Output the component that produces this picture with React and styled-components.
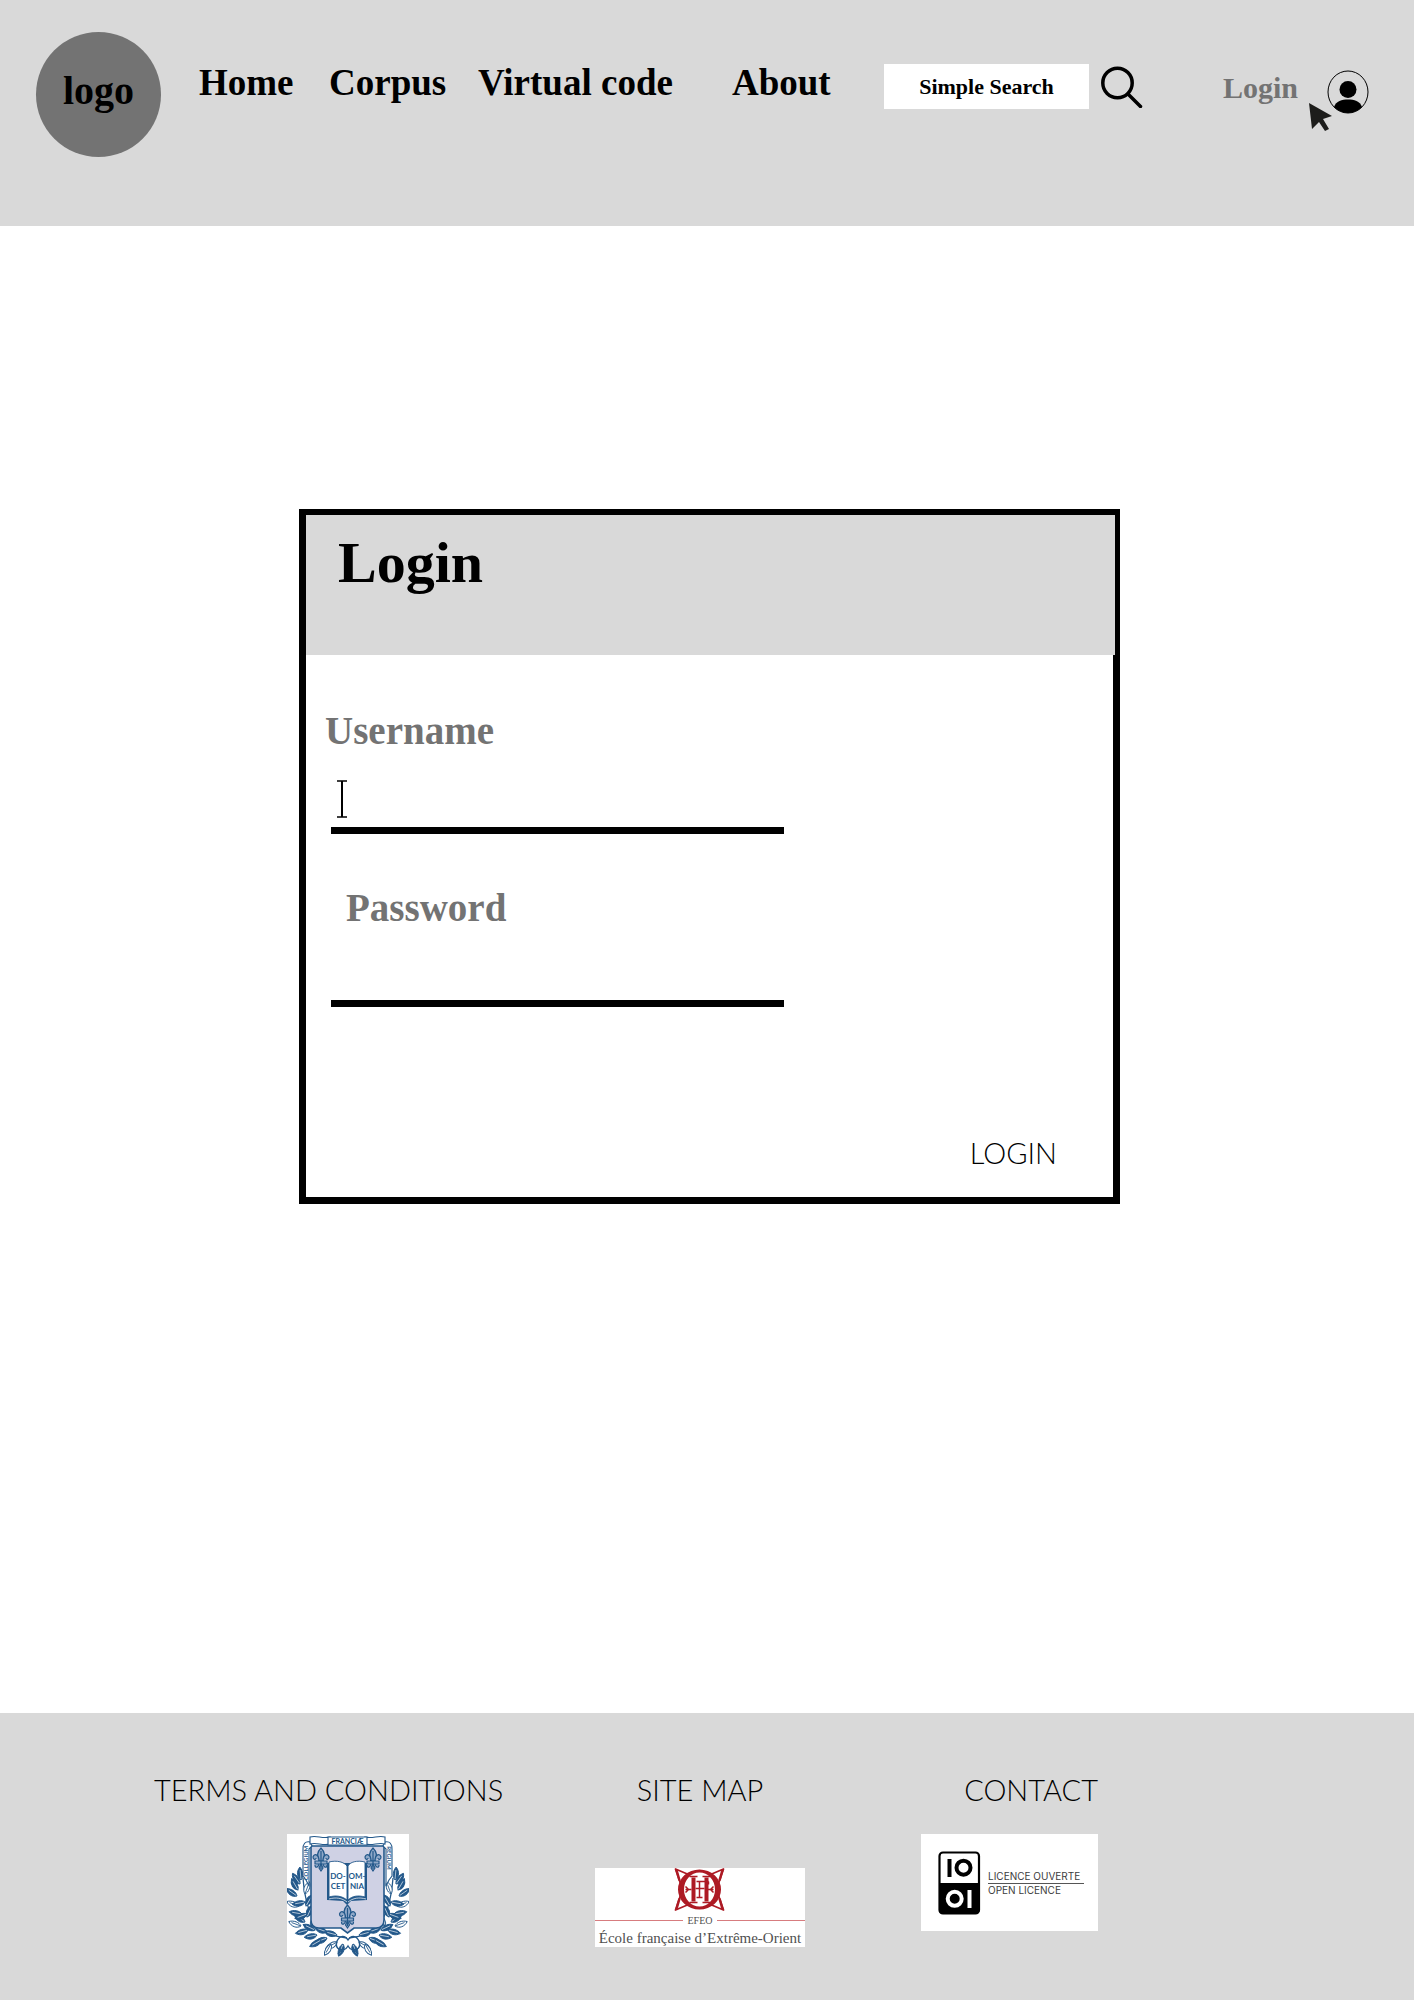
import React from "react";
import styled, { createGlobalStyle } from "styled-components";

const display = '"Liberation Serif", "Times New Roman", serif';
const thin = 'Lato, "Open Sans", sans-serif';
const grey = "#d9d9d9";
const muted = "#737373";
const blue = "#23588a";
const red = "#ad1a24";

const GlobalStyle = createGlobalStyle`
  *, *::before, *::after { box-sizing: border-box; }
  body { margin: 0; background: #fff; color: #000; font-family: ${display}; }
  button, input { font: inherit; color: inherit; border: 0; padding: 0; margin: 0; background: none; border-radius: 0; }
  button { cursor: pointer; }
  a { color: inherit; text-decoration: none; }
  svg { display: block; }
`;

const Header = styled.header`
  display: flex;
  align-items: flex-start;
  min-height: 226px;
  padding: 32px 45px 0 36px;
  background: ${grey};
  font-weight: 700;
`;

const Logo = styled.a`
  display: flex;
  align-items: center;
  justify-content: center;
  flex: none;
  width: 125px;
  height: 125px;
  margin-right: 38px;
  padding-bottom: 8px;
  border-radius: 50%;
  background: ${muted};
  font-size: 40px;
  line-height: 44px;
`;

const Nav = styled.nav`
  flex: 1;
  display: grid;
  grid-template-columns: 130fr 149fr 254fr 152fr;
  margin-top: 29px;
  font-size: 37px;
  line-height: 44px;
  white-space: nowrap;
`;

const Search = styled.form`
  display: flex;
  gap: 12px;
  margin: 32px 80px 0 0;
`;

const SearchBox = styled.input`
  width: 205px;
  height: 45px;
  background: #fff;
  text-align: center;
  font-size: 22px;
  &::placeholder { color: #000; opacity: 1; }
`;

const SearchButton = styled.button`
  height: 45px;
`;

const Account = styled.div`
  position: relative;
  display: flex;
  gap: 29px;
  margin-top: 33px;
  font-size: 30px;
  line-height: 46px;
  color: ${muted};
`;

const UserButton = styled.button`
  height: 53px;
`;

const Pointer = styled.svg`
  position: absolute;
  right: 36px;
  top: 38px;
`;

const Main = styled.main`
  padding: 283px 294px 509px 299px;
`;

const Card = styled.section`
  border: solid #000;
  border-width: 6px 7px 7px 7px;
`;

const CardHead = styled.div`
  height: 140px;
  margin-right: -2px;
  padding: 16px 32px;
  background: ${grey};
`;

const Title = styled.h1`
  margin: 0;
  font-size: 58px;
  line-height: 64px;
`;

const LoginForm = styled.form`
  display: flex;
  flex-direction: column;
  padding: 54px 56px 20px 25px;
`;

const Field = styled.div`
  position: relative;
  width: 453px;
  max-width: 100%;
  margin-bottom: 52px;
`;

const Label = styled.label`
  display: block;
  margin-left: ${(p) => p.$indent}px;
  font-size: 39px;
  font-weight: 700;
  line-height: 44px;
  color: ${muted};
`;

const TextInput = styled.input`
  display: block;
  width: 100%;
  height: ${(p) => p.$height}px;
  padding: 0 20px;
  border-bottom: 7px solid #000;
  font-size: 30px;
  outline: none;
`;

const Caret = styled.svg`
  position: absolute;
  left: 6px;
  bottom: 16px;
`;

const Submit = styled.button`
  align-self: flex-end;
  margin-top: 70px;
  font-family: ${thin};
  font-size: 29px;
  font-weight: 300;
  line-height: 48px;
`;

const Footer = styled.footer`
  display: grid;
  grid-template-columns: 441fr 326fr 177fr;
  align-items: start;
  min-height: 287px;
  padding: 53px 316px 43px 154px;
  background: ${grey};
`;

const Column = styled.div`
  display: flex;
  flex-direction: column;
  align-items: ${(p) => p.$align};
  width: ${(p) => p.$width}px;
`;

const FooterLink = styled.a`
  margin-bottom: ${(p) => p.$gap}px;
  font-family: ${thin};
  font-size: 29px;
  font-weight: 300;
  line-height: 48px;
  white-space: nowrap;
`;

const CrestLink = styled.a`
  margin-left: 133px;
`;

const leaves = [
  [14, 92, -160], [21, 96, 165], [30, 101, 170], [40, 104, 160], [50, 108, 150],
  [28, 96, 205], [40, 98, 200], [50, 101, 195], [44, 110, 120], [56, 110, 110],
  [18, 88, 215], [15, 80, 190], [12, 72, 200], [10, 62, 215], [11, 56, 240],
  [14, 46, 265], [18, 60, 290], [19, 72, 300], [20, 83, 295], [13, 50, 235],
  [24, 92, 300], [34, 106, 150], [18, 68, 170], [20, 80, 160],
];

const Branch = () => (
  <g>
    <path d="M60 104C40 102 20 96 16 44" fill="none" stroke={blue} strokeWidth="1.3" />
    {leaves.map(([x, y, a], i) => (
      <g key={i} transform={`translate(${x} ${y}) rotate(${a})`}>
        <path d="M0 0C3-4 9-4 13 0C9 3 3 3 0 0Z" fill={i % 4 === 0 ? "#fff" : blue} stroke={blue} strokeWidth=".9" />
        <path d="M1 0H10" stroke={i % 4 === 0 ? blue : "#c3d3e2"} strokeWidth=".8" />
      </g>
    ))}
  </g>
);

const Fleur = ({ x, y }) => (
  <g transform={`translate(${x} ${y})`} fill="#8fa8c8" stroke={blue} strokeWidth="1.2">
    <path d="M0-11C-5-6-4-2-2 2H2C4-2 5-6 0-11Z" />
    <path d="M-2 2C-2-5-7-6-8-2C-8 1-5 1-5-1M2 2C2-5 7-6 8-2C8 1 5 1 5-1" />
    <path d="M-6 2H6V5H-6ZM-2 5C-2 8-6 10-6 6M2 5C2 8 6 10 6 6M0 5L-2 9L0 12L2 9Z" />
    <path d="M0-8V10" />
  </g>
);

const Crest = () => (
  <svg width="122" height="123" viewBox="0 0 122 123" role="img" aria-label="Collège de France">
    <rect width="122" height="123" fill="#fff" />
    <Branch />
    <g transform="translate(122 0) scale(-1 1)"><Branch /></g>
    <g fill="none" stroke={blue} strokeWidth="1.4">
      <path d="M50 107C53 101 58 101 61 106C64 101 69 101 72 107C75 116 65 119 61 112C57 119 47 116 50 107ZM57 113L51 120M65 113L71 120" />
    </g>
    <path d="M24 12H97V86C97 92 94 94 89 94H67L60.500 99L54 94H32C27 94 24 92 24 86Z" fill="#cfd1e4" stroke={blue} strokeWidth="1.6" />
    <g fill="#fff" stroke={blue} strokeWidth="1.100">
      <path d="M23 8C18 7 16 10 16 15V42L19 46L22 52V15L25 12Z" />
      <path d="M98 8C103 7 105 10 105 15V42L102 46L99 52V15L96 12Z" />
      <path d="M23 3C30 1 35 5 43 3V10C35 12 30 8 23 10Z" />
      <path d="M98 3C91 1 86 5 78 3V10C86 12 91 8 98 10Z" />
      <path d="M41 3H80V11H41Z" />
    </g>
    <g fill={blue} fontFamily={thin} fontWeight="700" textAnchor="middle">
      <text x="60.500" y="9.500" fontSize="7">FRANCIÆ</text>
      <text transform="translate(21 29) rotate(-90)" fontSize="6">COLLEGIUM</text>
      <text transform="translate(100 24) rotate(90)" fontSize="6">REGIUM</text>
    </g>
    <Fleur x={34} y={25} />
    <Fleur x={86} y={25} />
    <path d="M40 29V66L56 67L60 71L64 67L80 66V29Z" fill={blue} />
    <path d="M42 28C50 26 57 28 60 32V66C55 62 49 61 42 63ZM78 28C70 26 63 28 61 32V66C65 62 71 61 78 63Z" fill="#fff" stroke={blue} strokeWidth=".9" />
    <path d="M42 65C49 63 55 64 60 68M79 65C72 63 66 64 61 68" fill="none" stroke="#fff" strokeWidth=".7" />
    <Fleur x={60.5} y={82} />
    <g fill={blue} fontFamily={thin} fontWeight="700" fontSize="8" textAnchor="middle">
      <text x="51" y="45">DO-</text>
      <text x="51" y="55">CET</text>
      <text x="70" y="45">OM-</text>
      <text x="70" y="55">NIA</text>
    </g>
  </svg>
);

const Corner = ({ turn }) => (
  <g transform={turn} stroke={red} strokeLinejoin="round">
    <path d="M-24-20.500L-11-15L-15-12L-19-6Z" fill="#fff" strokeWidth="1.800" />
    <path d="M-23-19.500L-20-9" strokeWidth="2.500" />
  </g>
);

const Efeo = () => (
  <svg width="210" height="79" viewBox="0 0 210 79" role="img" aria-label="École française d'Extrême-Orient">
    <rect width="210" height="79" fill="#fff" />
    <g transform="translate(104.500 21.500)">
      <Corner turn="scale(1 1)" />
      <Corner turn="scale(-1 1)" />
      <Corner turn="scale(1 -1)" />
      <Corner turn="scale(-1 -1)" />
      <path d="M-21.500 0A21.500 20 0 1 0 21.500 0A21.500 20 0 1 0-21.500 0ZM-15.500 0A15.500 17 0 1 1 15.500 0A15.500 17 0 1 1-15.500 0Z" fill={red} fillRule="evenodd" />
      <g fill="none" stroke={red}>
        <path d="M-6-12V12M7-12V12" strokeWidth="4" />
        <path d="M-10-13H-2M-10 13H-2M3-13H11M3 13H11M-4-1H5" strokeWidth="1.500" />
        <path d="M0-8V8M-3-8H9M-3 8H3M9-8V-5M-14 0H-8M8 0H14M-14-3L-11 0L-14 3M14-3L11 0L14 3" strokeWidth="1.500" />
      </g>
    </g>
    <path d="M0 52.500H88M122 52.500H210" stroke="#d77c7f" />
    <g fill="#505050" fontFamily={display} textAnchor="middle">
      <text x="105" y="56" fontSize="10">EFEO</text>
      <text x="105" y="75" fontSize="15">École française d’Extrême-Orient</text>
    </g>
  </svg>
);

const Licence = () => (
  <svg width="177" height="97" viewBox="0 0 177 97" role="img" aria-label="Licence ouverte, open licence">
    <rect width="177" height="97" fill="#fff" />
    <rect x="18.500" y="18.500" width="39.500" height="61" rx="3.500" fill="#fff" stroke="#000" strokeWidth="2.200" />
    <path d="M18 49H58.500V76A4 4 0 0 1 54.500 80H22A4 4 0 0 1 18 76Z" />
    <rect x="26.500" y="25" width="4" height="18" />
    <circle cx="42.500" cy="33.700" r="7" fill="none" stroke="#000" strokeWidth="4" />
    <circle cx="33.700" cy="64.800" r="7" fill="none" stroke="#fff" strokeWidth="4" />
    <rect x="46.500" y="56" width="4" height="18" fill="#fff" />
    <path d="M67 49.500H163" stroke="#555" />
    <g fill="#3c3c3c" fontFamily="Inter, sans-serif" fontSize="10">
      <text x="67" y="46">LICENCE OUVERTE</text>
      <text x="67" y="60">OPEN LICENCE</text>
    </g>
  </svg>
);

export default function App() {
  const stay = (e) => e.preventDefault();
  return (
    <>
      <GlobalStyle />
      <Header>
        <Logo href="#">logo</Logo>
        <Nav>
          <a href="#home">Home</a>
          <a href="#corpus">Corpus</a>
          <a href="#code">Virtual code</a>
          <a href="#about">About</a>
        </Nav>
        <Search role="search" onSubmit={stay}>
          <SearchBox type="text" aria-label="Simple Search" placeholder="Simple Search" />
          <SearchButton aria-label="Search">
            <svg width="42" height="42" viewBox="0 0 42 42" fill="none" stroke="#000" strokeWidth="3.500" strokeLinecap="round">
              <circle cx="16.500" cy="17" r="14.700" />
              <path d="M27 28L39.500 40.500" />
            </svg>
          </SearchButton>
        </Search>
        <Account>
          <a href="#login">Login</a>
          <UserButton aria-label="Account">
            <svg width="42" height="44" viewBox="0 0 42 44">
              <ellipse cx="21" cy="22" rx="20" ry="21" fill="none" stroke="#000" />
              <circle cx="21" cy="19.500" r="8.500" />
              <path d="M7 37C9 31 15 29.500 21 29.500S33 31 35 37C31 41 26 43 21 43S11 41 7 37Z" />
            </svg>
          </UserButton>
          <Pointer width="24" height="29" viewBox="0 0 24 29" aria-hidden="true">
            <path d="M0 0L23 13L14 16L20 26L16 28L10 19L3 26Z" fill="#1d1d1b" />
          </Pointer>
        </Account>
      </Header>

      <Main>
        <Card>
          <CardHead>
            <Title>Login</Title>
          </CardHead>
          <LoginForm onSubmit={stay}>
            <Field>
              <Label htmlFor="username" $indent={-6}>Username</Label>
              <TextInput id="username" type="text" $height={81} />
              <Caret width="10" height="38" viewBox="0 0 10 38" fill="none" stroke="#000" aria-hidden="true">
                <path d="M5 1V37" strokeWidth="2" />
                <path d="M0 1H10M0 37H10" strokeWidth="1.500" />
              </Caret>
            </Field>
            <Field>
              <Label htmlFor="password" $indent={15}>Password</Label>
              <TextInput id="password" type="password" $height={77} />
            </Field>
            <Submit type="submit">LOGIN</Submit>
          </LoginForm>
        </Card>
      </Main>

      <Footer>
        <Column $align="flex-start" $width={352}>
          <FooterLink href="#terms" $gap={20}>TERMS AND CONDITIONS</FooterLink>
          <CrestLink href="#college"><Crest /></CrestLink>
        </Column>
        <Column $align="center" $width={210}>
          <FooterLink href="#map" $gap={54}>SITE MAP</FooterLink>
          <a href="#efeo"><Efeo /></a>
        </Column>
        <Column $align="flex-end" $width={177}>
          <FooterLink href="#contact" $gap={20}>CONTACT</FooterLink>
          <a href="#licence"><Licence /></a>
        </Column>
      </Footer>
    </>
  );
}
